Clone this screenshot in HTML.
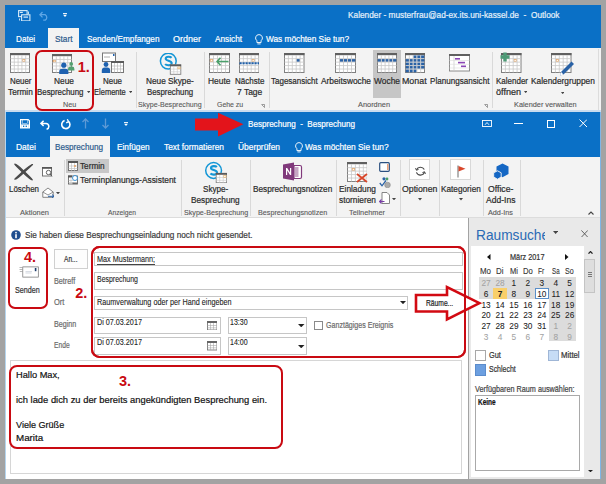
<!DOCTYPE html>
<html><head><meta charset="utf-8"><style>
div{-webkit-text-stroke:0.2px currentColor}
html,body{margin:0;padding:0;width:606px;height:484px;overflow:hidden;background:#a3a3a3;font-family:"Liberation Sans",sans-serif;}
#root{position:relative;width:606px;height:484px;overflow:hidden}
</style></head><body><div id="root">
<div style="position:absolute;left:5px;top:5px;width:596px;height:43px;background:#0a70c6;"></div>
<div style="position:absolute;left:5px;top:48px;width:596px;height:63px;background:#f3f3f3;"></div>
<div style="position:absolute;left:5px;top:110px;width:596px;height:2px;background:#c9dcef;"></div>
<div style="position:absolute;left:48px;top:28px;width:31px;height:20px;background:#f3f3f3;"></div>
<div style="position:absolute;left:347.50px;top:11.28px;line-height:9px;font-size:9px;font-weight:normal;color:#e6f0fa;white-space:pre;transform-origin:0 0;transform:scaleX(0.9206)">Kalender - musterfrau@ad-ex.its.uni-kassel.de  -  Outlook</div>
<div style="position:absolute;left:15.70px;top:34.88px;line-height:9px;font-size:9px;font-weight:normal;color:#fff;white-space:pre;transform-origin:0 0;transform:scaleX(0.9041)">Datei</div>
<div style="position:absolute;left:54.50px;top:34.88px;line-height:9px;font-size:9px;font-weight:normal;color:#2c5a8c;white-space:pre;transform-origin:0 0;transform:scaleX(0.9203)">Start</div>
<div style="position:absolute;left:86.50px;top:34.88px;line-height:9px;font-size:9px;font-weight:normal;color:#fff;white-space:pre;transform-origin:0 0;transform:scaleX(0.9111)">Senden/Empfangen</div>
<div style="position:absolute;left:173.00px;top:34.88px;line-height:9px;font-size:9px;font-weight:normal;color:#fff;white-space:pre;transform-origin:0 0;transform:scaleX(0.9994)">Ordner</div>
<div style="position:absolute;left:214.50px;top:34.88px;line-height:9px;font-size:9px;font-weight:normal;color:#fff;white-space:pre;transform-origin:0 0;transform:scaleX(0.9148)">Ansicht</div>
<div style="position:absolute;left:266.00px;top:34.88px;line-height:9px;font-size:9px;font-weight:normal;color:#fff;white-space:pre;transform-origin:0 0;transform:scaleX(0.9200)">Was möchten Sie tun?</div>
<svg style="position:absolute;left:254.5px;top:33.5px" width="8" height="11" viewBox="0 0 8 11"><path d="M4 0.6a3.4 3.4 0 0 0-2.1 6.1v1.8h4.2V6.7A3.4 3.4 0 0 0 4 0.6z" fill="none" stroke="#fff" stroke-width="0.9"/><line x1="2.4" y1="9.9" x2="5.6" y2="9.9" stroke="#fff" stroke-width="0.9"/></svg>
<svg style="position:absolute;left:18px;top:9.5px" width="12.5" height="11.5" viewBox="0 0 12.5 11.5"><rect x="0.6" y="0.6" width="8.5" height="6" fill="#0b6dc5" stroke="#d7ebf8" stroke-width="1.1"/><rect x="1.8" y="1.8" width="3" height="1.2" fill="#d7ebf8"/><rect x="3.6" y="4.8" width="8.3" height="6.1" fill="#0b6dc5" stroke="#d7ebf8" stroke-width="1.1"/><rect x="5.5" y="6.5" width="4.5" height="1.2" fill="#d7ebf8"/><path d="M10.5 1.5v2.5M1.5 8.5v2" stroke="#d7ebf8" stroke-width="0.9"/></svg>
<svg style="position:absolute;left:38.5px;top:11px" width="11" height="10" viewBox="0 0 11 10"><path d="M3.5 1L0.9 3.7L3.5 6.4M1.1 3.7h5.2a3.2 3.2 0 0 1 0 5.4H4.2" fill="none" stroke="#5ea6e6" stroke-width="1.3"/></svg>
<svg style="position:absolute;left:63px;top:13px" width="4" height="4" viewBox="0 0 4 4"><rect x="0" y="0" width="4" height="0.9" fill="#fff"/><polygon points="0,1.8 4,1.8 2,4" fill="#fff"/></svg>
<svg style="position:absolute;left:10px;top:53px" width="20" height="20" viewBox="0 0 20 20"><rect x="0.5" y="0.5" width="19" height="19" fill="#fff" stroke="#808080" stroke-width="1"/><rect x="0" y="0" width="20" height="2.2" fill="#606060"/><rect x="12.70" y="6.46" width="2.20" height="1.86" fill="none" stroke="#e9a866" stroke-width="0.8"/><line x1="4.30" y1="2.2" x2="4.30" y2="19.5" stroke="#c8c8c8" stroke-width="0.8"/><line x1="8.10" y1="2.2" x2="8.10" y2="19.5" stroke="#c8c8c8" stroke-width="0.8"/><line x1="11.90" y1="2.2" x2="11.90" y2="19.5" stroke="#c8c8c8" stroke-width="0.8"/><line x1="15.70" y1="2.2" x2="15.70" y2="19.5" stroke="#c8c8c8" stroke-width="0.8"/><line x1="0.5" y1="5.66" x2="19.5" y2="5.66" stroke="#c8c8c8" stroke-width="0.8"/><line x1="0.5" y1="9.12" x2="19.5" y2="9.12" stroke="#c8c8c8" stroke-width="0.8"/><line x1="0.5" y1="12.58" x2="19.5" y2="12.58" stroke="#c8c8c8" stroke-width="0.8"/><line x1="0.5" y1="16.04" x2="19.5" y2="16.04" stroke="#c8c8c8" stroke-width="0.8"/></svg>
<svg style="position:absolute;left:52px;top:54px" width="20" height="19" viewBox="0 0 20 19"><rect x="0.5" y="0.5" width="19" height="18" fill="#fff" stroke="#808080" stroke-width="1"/><rect x="0" y="0" width="20" height="2.2" fill="#606060"/><rect x="1.30" y="6.26" width="2.20" height="1.66" fill="none" stroke="#e9a866" stroke-width="0.8"/><line x1="4.30" y1="2.2" x2="4.30" y2="18.5" stroke="#c8c8c8" stroke-width="0.8"/><line x1="8.10" y1="2.2" x2="8.10" y2="18.5" stroke="#c8c8c8" stroke-width="0.8"/><line x1="11.90" y1="2.2" x2="11.90" y2="18.5" stroke="#c8c8c8" stroke-width="0.8"/><line x1="15.70" y1="2.2" x2="15.70" y2="18.5" stroke="#c8c8c8" stroke-width="0.8"/><line x1="0.5" y1="5.46" x2="19.5" y2="5.46" stroke="#c8c8c8" stroke-width="0.8"/><line x1="0.5" y1="8.72" x2="19.5" y2="8.72" stroke="#c8c8c8" stroke-width="0.8"/><line x1="0.5" y1="11.98" x2="19.5" y2="11.98" stroke="#c8c8c8" stroke-width="0.8"/><line x1="0.5" y1="15.24" x2="19.5" y2="15.24" stroke="#c8c8c8" stroke-width="0.8"/></svg>
<svg style="position:absolute;left:59px;top:62px" width="16" height="12" viewBox="0 0 16 12"><circle cx="4.8" cy="3.2" r="2.6" fill="#1f62b0"/><path d="M0.2 12v-2.3a3 3 0 0 1 3-3h3.2a3 3 0 0 1 3 3V12z" fill="#1f62b0"/><circle cx="12.2" cy="1.9" r="1.9" fill="#53a070"/><path d="M9 8.6v-1.6a2.4 2.4 0 0 1 2.4-2.4h1.6a2.4 2.4 0 0 1 2.4 2.4v1.6z" fill="#53a070"/></svg>
<svg style="position:absolute;left:101px;top:52px" width="23" height="21" viewBox="0 0 23 21"><rect x="1.5" y="1" width="13" height="8.5" fill="#fff" stroke="#777" stroke-width="1"/><path d="M3 5h6" stroke="#999" stroke-width="0.8"/><rect x="12" y="2" width="1.5" height="2" fill="#1f62b0"/><rect x="10.5" y="9.5" width="12" height="11" fill="#fff" stroke="#777" stroke-width="1"/><rect x="10" y="9" width="13" height="2" fill="#5b5b5b"/><path d="M13.5 11v9.5M16.5 11v9.5M19.5 11v9.5M11 14h11M11 17h11" stroke="#bbb" stroke-width="0.7"/><circle cx="5" cy="12.5" r="2.4" fill="#1f62b0"/><path d="M0.8 21v-2.6a3 3 0 0 1 3-3h2.4a3 3 0 0 1 3 3V21z" fill="#1f62b0"/></svg>
<svg style="position:absolute;left:159px;top:53px" width="23" height="22" viewBox="0 0 23 22"><circle cx="9.3" cy="8.1" r="7.9" fill="none" stroke="#1396d6" stroke-width="1.5"/><path d="M12.600000000000001 4.699999999999999c-1.2-1.2-5.6-1.6-5.9 0.9c-0.2 2.4 6.2 1.7 6 4.6c-0.2 2.7-5.2 2.4-6.6 0.9" fill="none" stroke="#1396d6" stroke-width="2.1"/><rect x="11.3" y="11.8" width="10.5" height="9.5" fill="#fff" stroke="#808080" stroke-width="0.9"/><rect x="11.0" y="11.5" width="11.1" height="1.8" fill="#5b5b5b"/><path d="M14.8 13.3v8M18.3 13.3v8M11.3 16.1h10.5M11.3 18.8h10.5" stroke="#c8c8c8" stroke-width="0.6"/><rect x="18.9" y="14.0" width="2.2" height="1.8" fill="none" stroke="#e8b060" stroke-width="0.6"/></svg>
<svg style="position:absolute;left:208.5px;top:53px" width="21" height="20" viewBox="0 0 21 20"><rect x="0.5" y="0.5" width="20" height="19" fill="#fff" stroke="#808080" stroke-width="1"/><rect x="0" y="0" width="21" height="2.2" fill="#606060"/><rect x="1.30" y="6.46" width="2.40" height="1.86" fill="none" stroke="#e9a866" stroke-width="0.8"/><line x1="4.50" y1="2.2" x2="4.50" y2="19.5" stroke="#c8c8c8" stroke-width="0.8"/><line x1="8.50" y1="2.2" x2="8.50" y2="19.5" stroke="#c8c8c8" stroke-width="0.8"/><line x1="12.50" y1="2.2" x2="12.50" y2="19.5" stroke="#c8c8c8" stroke-width="0.8"/><line x1="16.50" y1="2.2" x2="16.50" y2="19.5" stroke="#c8c8c8" stroke-width="0.8"/><line x1="0.5" y1="5.66" x2="20.5" y2="5.66" stroke="#c8c8c8" stroke-width="0.8"/><line x1="0.5" y1="9.12" x2="20.5" y2="9.12" stroke="#c8c8c8" stroke-width="0.8"/><line x1="0.5" y1="12.58" x2="20.5" y2="12.58" stroke="#c8c8c8" stroke-width="0.8"/><line x1="0.5" y1="16.04" x2="20.5" y2="16.04" stroke="#c8c8c8" stroke-width="0.8"/></svg>
<svg style="position:absolute;left:216px;top:57px" width="13" height="9" viewBox="0 0 13 9"><path d="M4.5 0.8L1 4.5L4.5 8.2M1.2 4.5H12.5" fill="none" stroke="#4aa06a" stroke-width="1.6"/></svg>
<svg style="position:absolute;left:238.6px;top:53px" width="20.5" height="20" viewBox="0 0 20.5 20"><rect x="0.5" y="0.5" width="19.5" height="19" fill="#fff" stroke="#808080" stroke-width="1"/><rect x="0" y="0" width="20.5" height="2.2" fill="#606060"/><rect x="13.00" y="6.46" width="2.30" height="1.86" fill="none" stroke="#e9a866" stroke-width="0.8"/><line x1="4.40" y1="2.2" x2="4.40" y2="19.5" stroke="#c8c8c8" stroke-width="0.8"/><line x1="8.30" y1="2.2" x2="8.30" y2="19.5" stroke="#c8c8c8" stroke-width="0.8"/><line x1="12.20" y1="2.2" x2="12.20" y2="19.5" stroke="#c8c8c8" stroke-width="0.8"/><line x1="16.10" y1="2.2" x2="16.10" y2="19.5" stroke="#c8c8c8" stroke-width="0.8"/><line x1="0.5" y1="5.66" x2="20.0" y2="5.66" stroke="#c8c8c8" stroke-width="0.8"/><line x1="0.5" y1="9.12" x2="20.0" y2="9.12" stroke="#c8c8c8" stroke-width="0.8"/><line x1="0.5" y1="12.58" x2="20.0" y2="12.58" stroke="#c8c8c8" stroke-width="0.8"/><line x1="0.5" y1="16.04" x2="20.0" y2="16.04" stroke="#c8c8c8" stroke-width="0.8"/></svg>
<svg style="position:absolute;left:238.6px;top:62px" width="20.5" height="2.5" viewBox="0 0 20.5 2.5"><line x1="0.5" y1="1.2" x2="20" y2="1.2" stroke="#1f5fa8" stroke-width="2" stroke-dasharray="2.2 0.8"/></svg>
<svg style="position:absolute;left:284px;top:53px" width="20.5" height="20" viewBox="0 0 20.5 20"><rect x="0.5" y="0.5" width="19.5" height="19" fill="#fff" stroke="#808080" stroke-width="1"/><rect x="0" y="0" width="20.5" height="2.2" fill="#606060"/><rect x="12.45" y="5.91" width="3.40" height="2.96" fill="#2a62a6"/><line x1="4.40" y1="2.2" x2="4.40" y2="19.5" stroke="#c8c8c8" stroke-width="0.8"/><line x1="8.30" y1="2.2" x2="8.30" y2="19.5" stroke="#c8c8c8" stroke-width="0.8"/><line x1="12.20" y1="2.2" x2="12.20" y2="19.5" stroke="#c8c8c8" stroke-width="0.8"/><line x1="16.10" y1="2.2" x2="16.10" y2="19.5" stroke="#c8c8c8" stroke-width="0.8"/><line x1="0.5" y1="5.66" x2="20.0" y2="5.66" stroke="#c8c8c8" stroke-width="0.8"/><line x1="0.5" y1="9.12" x2="20.0" y2="9.12" stroke="#c8c8c8" stroke-width="0.8"/><line x1="0.5" y1="12.58" x2="20.0" y2="12.58" stroke="#c8c8c8" stroke-width="0.8"/><line x1="0.5" y1="16.04" x2="20.0" y2="16.04" stroke="#c8c8c8" stroke-width="0.8"/></svg>
<svg style="position:absolute;left:335px;top:53px" width="21" height="20" viewBox="0 0 21 20"><rect x="0.5" y="0.5" width="20" height="19" fill="#fff" stroke="#808080" stroke-width="1"/><rect x="0" y="0" width="21" height="2.2" fill="#606060"/><rect x="4.75" y="5.91" width="3.50" height="2.96" fill="#2a62a6"/><rect x="8.75" y="5.91" width="3.50" height="2.96" fill="#2a62a6"/><rect x="12.75" y="5.91" width="3.50" height="2.96" fill="#2a62a6"/><rect x="16.75" y="5.91" width="3.50" height="2.96" fill="#2a62a6"/><line x1="4.50" y1="2.2" x2="4.50" y2="19.5" stroke="#c8c8c8" stroke-width="0.8"/><line x1="8.50" y1="2.2" x2="8.50" y2="19.5" stroke="#c8c8c8" stroke-width="0.8"/><line x1="12.50" y1="2.2" x2="12.50" y2="19.5" stroke="#c8c8c8" stroke-width="0.8"/><line x1="16.50" y1="2.2" x2="16.50" y2="19.5" stroke="#c8c8c8" stroke-width="0.8"/><line x1="0.5" y1="5.66" x2="20.5" y2="5.66" stroke="#c8c8c8" stroke-width="0.8"/><line x1="0.5" y1="9.12" x2="20.5" y2="9.12" stroke="#c8c8c8" stroke-width="0.8"/><line x1="0.5" y1="12.58" x2="20.5" y2="12.58" stroke="#c8c8c8" stroke-width="0.8"/><line x1="0.5" y1="16.04" x2="20.5" y2="16.04" stroke="#c8c8c8" stroke-width="0.8"/></svg>
<div style="position:absolute;left:372.8px;top:50px;width:28px;height:48px;background:#c6c6c6;"></div>
<svg style="position:absolute;left:376.5px;top:53px" width="20" height="20" viewBox="0 0 20 20"><rect x="0.5" y="0.5" width="19" height="19" fill="#fff" stroke="#808080" stroke-width="1"/><rect x="0" y="0" width="20" height="2.2" fill="#606060"/><rect x="0.75" y="5.91" width="3.30" height="2.96" fill="#2a62a6"/><rect x="4.55" y="5.91" width="3.30" height="2.96" fill="#2a62a6"/><rect x="8.35" y="5.91" width="3.30" height="2.96" fill="#2a62a6"/><rect x="12.15" y="5.91" width="3.30" height="2.96" fill="#2a62a6"/><rect x="15.95" y="5.91" width="3.30" height="2.96" fill="#2a62a6"/><line x1="4.30" y1="2.2" x2="4.30" y2="19.5" stroke="#c8c8c8" stroke-width="0.8"/><line x1="8.10" y1="2.2" x2="8.10" y2="19.5" stroke="#c8c8c8" stroke-width="0.8"/><line x1="11.90" y1="2.2" x2="11.90" y2="19.5" stroke="#c8c8c8" stroke-width="0.8"/><line x1="15.70" y1="2.2" x2="15.70" y2="19.5" stroke="#c8c8c8" stroke-width="0.8"/><line x1="0.5" y1="5.66" x2="19.5" y2="5.66" stroke="#c8c8c8" stroke-width="0.8"/><line x1="0.5" y1="9.12" x2="19.5" y2="9.12" stroke="#c8c8c8" stroke-width="0.8"/><line x1="0.5" y1="12.58" x2="19.5" y2="12.58" stroke="#c8c8c8" stroke-width="0.8"/><line x1="0.5" y1="16.04" x2="19.5" y2="16.04" stroke="#c8c8c8" stroke-width="0.8"/></svg>
<svg style="position:absolute;left:404.6px;top:53px" width="20" height="20" viewBox="0 0 20 20"><rect x="0.5" y="0.5" width="19" height="19" fill="#fff" stroke="#808080" stroke-width="1"/><rect x="0" y="0" width="20" height="2.2" fill="#606060"/><rect x="8.35" y="2.45" width="3.30" height="2.96" fill="#2a62a6"/><rect x="12.15" y="2.45" width="3.30" height="2.96" fill="#2a62a6"/><rect x="15.95" y="2.45" width="3.30" height="2.96" fill="#2a62a6"/><rect x="0.75" y="5.91" width="3.30" height="2.96" fill="#2a62a6"/><rect x="4.55" y="5.91" width="3.30" height="2.96" fill="#2a62a6"/><rect x="8.35" y="5.91" width="3.30" height="2.96" fill="#2a62a6"/><rect x="12.15" y="5.91" width="3.30" height="2.96" fill="#2a62a6"/><rect x="15.95" y="5.91" width="3.30" height="2.96" fill="#2a62a6"/><rect x="0.75" y="9.37" width="3.30" height="2.96" fill="#2a62a6"/><rect x="4.55" y="9.37" width="3.30" height="2.96" fill="#2a62a6"/><rect x="8.35" y="9.37" width="3.30" height="2.96" fill="#2a62a6"/><rect x="12.15" y="9.37" width="3.30" height="2.96" fill="#2a62a6"/><rect x="15.95" y="9.37" width="3.30" height="2.96" fill="#2a62a6"/><rect x="0.75" y="12.83" width="3.30" height="2.96" fill="#2a62a6"/><rect x="4.55" y="12.83" width="3.30" height="2.96" fill="#2a62a6"/><rect x="8.35" y="12.83" width="3.30" height="2.96" fill="#2a62a6"/><rect x="12.15" y="12.83" width="3.30" height="2.96" fill="#2a62a6"/><rect x="15.95" y="12.83" width="3.30" height="2.96" fill="#2a62a6"/><rect x="0.75" y="16.29" width="3.30" height="2.96" fill="#2a62a6"/><rect x="4.55" y="16.29" width="3.30" height="2.96" fill="#2a62a6"/><rect x="8.35" y="16.29" width="3.30" height="2.96" fill="#2a62a6"/><line x1="4.30" y1="2.2" x2="4.30" y2="19.5" stroke="#c8c8c8" stroke-width="0.8"/><line x1="8.10" y1="2.2" x2="8.10" y2="19.5" stroke="#c8c8c8" stroke-width="0.8"/><line x1="11.90" y1="2.2" x2="11.90" y2="19.5" stroke="#c8c8c8" stroke-width="0.8"/><line x1="15.70" y1="2.2" x2="15.70" y2="19.5" stroke="#c8c8c8" stroke-width="0.8"/><line x1="0.5" y1="5.66" x2="19.5" y2="5.66" stroke="#c8c8c8" stroke-width="0.8"/><line x1="0.5" y1="9.12" x2="19.5" y2="9.12" stroke="#c8c8c8" stroke-width="0.8"/><line x1="0.5" y1="12.58" x2="19.5" y2="12.58" stroke="#c8c8c8" stroke-width="0.8"/><line x1="0.5" y1="16.04" x2="19.5" y2="16.04" stroke="#c8c8c8" stroke-width="0.8"/></svg>
<svg style="position:absolute;left:448.5px;top:54px" width="21" height="17.5" viewBox="0 0 21 17.5"><rect x="0.5" y="0.5" width="20" height="16.5" fill="#fff" stroke="#808080" stroke-width="0.9"/><rect x="0" y="0" width="21" height="2" fill="#606060"/><path d="M5 2v15" stroke="#c8c8c8" stroke-width="0.7"/><path d="M0.5 6.5h20M0.5 10.3h20M0.5 14h20" stroke="#dcdcdc" stroke-width="0.6"/><rect x="6" y="4" width="5" height="1.6" fill="#8a45b5"/><rect x="9" y="7.8" width="7" height="1.6" fill="#8a45b5"/><rect x="12" y="11.5" width="5" height="1.6" fill="#8a45b5"/></svg>
<svg style="position:absolute;left:501px;top:53px" width="20.5" height="20" viewBox="0 0 20.5 20"><rect x="0.5" y="0.5" width="19.5" height="19" fill="#fff" stroke="#808080" stroke-width="1"/><rect x="0" y="0" width="20.5" height="2.2" fill="#606060"/><rect x="13.00" y="6.46" width="2.30" height="1.86" fill="none" stroke="#e9a866" stroke-width="0.8"/><line x1="4.40" y1="2.2" x2="4.40" y2="19.5" stroke="#c8c8c8" stroke-width="0.8"/><line x1="8.30" y1="2.2" x2="8.30" y2="19.5" stroke="#c8c8c8" stroke-width="0.8"/><line x1="12.20" y1="2.2" x2="12.20" y2="19.5" stroke="#c8c8c8" stroke-width="0.8"/><line x1="16.10" y1="2.2" x2="16.10" y2="19.5" stroke="#c8c8c8" stroke-width="0.8"/><line x1="0.5" y1="5.66" x2="20.0" y2="5.66" stroke="#c8c8c8" stroke-width="0.8"/><line x1="0.5" y1="9.12" x2="20.0" y2="9.12" stroke="#c8c8c8" stroke-width="0.8"/><line x1="0.5" y1="12.58" x2="20.0" y2="12.58" stroke="#c8c8c8" stroke-width="0.8"/><line x1="0.5" y1="16.04" x2="20.0" y2="16.04" stroke="#c8c8c8" stroke-width="0.8"/></svg>
<svg style="position:absolute;left:500px;top:52px" width="10" height="10" viewBox="0 0 10 10"><path d="M3.3 0.5h3.4v2.8h2.8v3.4H6.7v2.8H3.3V6.7H0.5V3.3h2.8z" fill="#4e9a76"/></svg>
<svg style="position:absolute;left:551px;top:53px" width="20.5" height="20" viewBox="0 0 20.5 20"><rect x="0.5" y="0.5" width="19.5" height="19" fill="#fff" stroke="#808080" stroke-width="1"/><rect x="0" y="0" width="20.5" height="2.2" fill="#606060"/><rect x="5.20" y="6.46" width="2.30" height="1.86" fill="none" stroke="#e9a866" stroke-width="0.8"/><line x1="4.40" y1="2.2" x2="4.40" y2="19.5" stroke="#c8c8c8" stroke-width="0.8"/><line x1="8.30" y1="2.2" x2="8.30" y2="19.5" stroke="#c8c8c8" stroke-width="0.8"/><line x1="12.20" y1="2.2" x2="12.20" y2="19.5" stroke="#c8c8c8" stroke-width="0.8"/><line x1="16.10" y1="2.2" x2="16.10" y2="19.5" stroke="#c8c8c8" stroke-width="0.8"/><line x1="0.5" y1="5.66" x2="20.0" y2="5.66" stroke="#c8c8c8" stroke-width="0.8"/><line x1="0.5" y1="9.12" x2="20.0" y2="9.12" stroke="#c8c8c8" stroke-width="0.8"/><line x1="0.5" y1="12.58" x2="20.0" y2="12.58" stroke="#c8c8c8" stroke-width="0.8"/><line x1="0.5" y1="16.04" x2="20.0" y2="16.04" stroke="#c8c8c8" stroke-width="0.8"/></svg>
<svg style="position:absolute;left:558px;top:59.5px" width="18" height="17" viewBox="0 0 18 17"><path d="M2 15.5L3 12L13.5 1.5L16 4L5.5 14.5z" fill="#2a62a6"/><path d="M2 15.5L3 12L5.5 14.5z" fill="#fff"/></svg>
<div style="position:absolute;left:9.70px;top:77.20px;line-height:8.5px;font-size:8.5px;font-weight:normal;color:#2b2b2b;white-space:pre;transform-origin:0 0;transform:scaleX(0.9285)">Neuer</div>
<div style="position:absolute;left:8.40px;top:88.00px;line-height:8.5px;font-size:8.5px;font-weight:normal;color:#2b2b2b;white-space:pre;transform-origin:0 0;transform:scaleX(0.9720)">Termin</div>
<div style="position:absolute;left:53.60px;top:77.20px;line-height:8.5px;font-size:8.5px;font-weight:normal;color:#2b2b2b;white-space:pre;transform-origin:0 0;transform:scaleX(0.9789)">Neue</div>
<div style="position:absolute;left:37.00px;top:88.00px;line-height:8.5px;font-size:8.5px;font-weight:normal;color:#2b2b2b;white-space:pre;transform-origin:0 0;transform:scaleX(0.9283)">Besprechung</div>
<svg style="position:absolute;left:86.6px;top:90.7px" width="3.4" height="2.2" viewBox="0 0 3.4 2.2"><polygon points="0,0 3.4,0 1.7,2.2" fill="#444"/></svg>
<div style="position:absolute;left:103.00px;top:77.20px;line-height:8.5px;font-size:8.5px;font-weight:normal;color:#2b2b2b;white-space:pre;transform-origin:0 0;transform:scaleX(0.9347)">Neue</div>
<div style="position:absolute;left:94.00px;top:88.00px;line-height:8.5px;font-size:8.5px;font-weight:normal;color:#2b2b2b;white-space:pre;transform-origin:0 0;transform:scaleX(0.8853)">Elemente</div>
<svg style="position:absolute;left:129.1px;top:90.7px" width="3.4" height="2.2" viewBox="0 0 3.4 2.2"><polygon points="0,0 3.4,0 1.7,2.2" fill="#444"/></svg>
<div style="position:absolute;left:63.10px;top:100.87px;line-height:7.6px;font-size:7.6px;font-weight:normal;color:#5a5a5a;-webkit-text-stroke:0.12px currentColor;white-space:pre;transform-origin:0 0;transform:scaleX(0.9471)">Neu</div>
<div style="position:absolute;left:136px;top:52px;width:1px;height:56px;background:#d9d9d9;"></div>
<div style="position:absolute;left:204px;top:52px;width:1px;height:56px;background:#d9d9d9;"></div>
<div style="position:absolute;left:268.5px;top:52px;width:1px;height:56px;background:#d9d9d9;"></div>
<div style="position:absolute;left:491.8px;top:52px;width:1px;height:56px;background:#d9d9d9;"></div>
<div style="position:absolute;left:145.70px;top:77.20px;line-height:8.5px;font-size:8.5px;font-weight:normal;color:#2b2b2b;white-space:pre;transform-origin:0 0;transform:scaleX(0.9727)">Neue Skype-</div>
<div style="position:absolute;left:146.60px;top:88.00px;line-height:8.5px;font-size:8.5px;font-weight:normal;color:#2b2b2b;white-space:pre;transform-origin:0 0;transform:scaleX(0.9223)">Besprechung</div>
<div style="position:absolute;left:138.00px;top:100.87px;line-height:7.6px;font-size:7.6px;font-weight:normal;color:#5a5a5a;-webkit-text-stroke:0.12px currentColor;white-space:pre;transform-origin:0 0;transform:scaleX(0.9300)">Skype-Besprechung</div>
<div style="position:absolute;left:208.00px;top:77.20px;line-height:8.5px;font-size:8.5px;font-weight:normal;color:#2b2b2b;white-space:pre;transform-origin:0 0;transform:scaleX(0.9917)">Heute</div>
<div style="position:absolute;left:234.60px;top:77.20px;line-height:8.5px;font-size:8.5px;font-weight:normal;color:#2b2b2b;white-space:pre;transform-origin:0 0;transform:scaleX(0.9427)">Nächste</div>
<div style="position:absolute;left:236.70px;top:88.00px;line-height:8.5px;font-size:8.5px;font-weight:normal;color:#2b2b2b;white-space:pre;transform-origin:0 0;transform:scaleX(0.9970)">7 Tage</div>
<div style="position:absolute;left:216.80px;top:100.87px;line-height:7.6px;font-size:7.6px;font-weight:normal;color:#5a5a5a;-webkit-text-stroke:0.12px currentColor;white-space:pre;transform-origin:0 0;transform:scaleX(0.9123)">Gehe zu</div>
<svg style="position:absolute;left:260.5px;top:103.5px" width="4" height="4" viewBox="0 0 4 4"><path d="M0.5 0.5h3v3M0.8 0.8L3.5 3.5" fill="none" stroke="#777" stroke-width="0.7"/></svg>
<div style="position:absolute;left:271.00px;top:77.20px;line-height:8.5px;font-size:8.5px;font-weight:normal;color:#2b2b2b;white-space:pre;transform-origin:0 0;transform:scaleX(0.9411)">Tagesansicht</div>
<div style="position:absolute;left:321.00px;top:77.20px;line-height:8.5px;font-size:8.5px;font-weight:normal;color:#2b2b2b;white-space:pre;transform-origin:0 0;transform:scaleX(0.9798)">Arbeitswoche</div>
<div style="position:absolute;left:374.00px;top:77.20px;line-height:8.5px;font-size:8.5px;font-weight:normal;color:#2b2b2b;white-space:pre;transform-origin:0 0;transform:scaleX(0.9881)">Woche</div>
<div style="position:absolute;left:402.00px;top:77.20px;line-height:8.5px;font-size:8.5px;font-weight:normal;color:#2b2b2b;white-space:pre;transform-origin:0 0;transform:scaleX(1.0413)">Monat</div>
<div style="position:absolute;left:429.60px;top:77.20px;line-height:8.5px;font-size:8.5px;font-weight:normal;color:#2b2b2b;white-space:pre;transform-origin:0 0;transform:scaleX(0.9521)">Planungsansicht</div>
<div style="position:absolute;left:358.00px;top:100.87px;line-height:7.6px;font-size:7.6px;font-weight:normal;color:#5a5a5a;-webkit-text-stroke:0.12px currentColor;white-space:pre;transform-origin:0 0;transform:scaleX(0.9715)">Anordnen</div>
<svg style="position:absolute;left:484px;top:103.5px" width="4" height="4" viewBox="0 0 4 4"><path d="M0.5 0.5h3v3M0.8 0.8L3.5 3.5" fill="none" stroke="#777" stroke-width="0.7"/></svg>
<div style="position:absolute;left:496.00px;top:77.20px;line-height:8.5px;font-size:8.5px;font-weight:normal;color:#2b2b2b;white-space:pre;transform-origin:0 0;transform:scaleX(0.9403)">Kalender</div>
<div style="position:absolute;left:496.00px;top:88.00px;line-height:8.5px;font-size:8.5px;font-weight:normal;color:#2b2b2b;white-space:pre;transform-origin:0 0;transform:scaleX(1.0645)">öffnen</div>
<svg style="position:absolute;left:523.7px;top:90.9px" width="3.4" height="2.2" viewBox="0 0 3.4 2.2"><polygon points="0,0 3.4,0 1.7,2.2" fill="#444"/></svg>
<div style="position:absolute;left:530.50px;top:77.20px;line-height:8.5px;font-size:8.5px;font-weight:normal;color:#2b2b2b;white-space:pre;transform-origin:0 0;transform:scaleX(0.9780)">Kalendergruppen</div>
<svg style="position:absolute;left:561px;top:91.5px" width="3.4" height="2.2" viewBox="0 0 3.4 2.2"><polygon points="0,0 3.4,0 1.7,2.2" fill="#444"/></svg>
<div style="position:absolute;left:514.00px;top:100.87px;line-height:7.6px;font-size:7.6px;font-weight:normal;color:#5a5a5a;-webkit-text-stroke:0.12px currentColor;white-space:pre;transform-origin:0 0;transform:scaleX(0.9644)">Kalender verwalten</div>
<div style="position:absolute;left:598px;top:49px;width:1px;height:61px;background:#dcdcdc;"></div>
<div style="position:absolute;left:34.9px;top:50px;width:59.50000000000001px;height:61px;box-sizing:border-box;border:2.8px solid #c90a12;background:transparent;border-radius:7px"></div>
<div style="position:absolute;left:77.75px;top:59.93px;line-height:14.5px;font-size:14.5px;font-weight:bold;color:#c90a12;-webkit-text-stroke:0px currentColor;white-space:pre;transform-origin:0 0;transform:scaleX(1.0000)">1.</div>
<div style="position:absolute;left:5px;top:112px;width:596px;height:45px;background:#0a70c6;"></div>
<div style="position:absolute;left:5px;top:157px;width:596px;height:61px;background:#f3f3f3;"></div>
<div style="position:absolute;left:5px;top:218px;width:463px;height:261px;background:#ffffff;"></div>
<div style="position:absolute;left:5px;top:217.4px;width:596px;height:1px;background:#dcdcdc;"></div>
<div style="position:absolute;left:49.7px;top:136px;width:60.3px;height:21px;background:#f3f3f3;"></div>
<div style="position:absolute;left:248.00px;top:120.38px;line-height:9px;font-size:9px;font-weight:normal;color:#fff;white-space:pre;transform-origin:0 0;transform:scaleX(0.8986)">Besprechung  -  Besprechung</div>
<div style="position:absolute;left:16.00px;top:143.18px;line-height:9px;font-size:9px;font-weight:normal;color:#fff;white-space:pre;transform-origin:0 0;transform:scaleX(0.9422)">Datei</div>
<div style="position:absolute;left:55.40px;top:143.18px;line-height:9px;font-size:9px;font-weight:normal;color:#2c5a8c;white-space:pre;transform-origin:0 0;transform:scaleX(0.9067)">Besprechung</div>
<div style="position:absolute;left:117.00px;top:143.18px;line-height:9px;font-size:9px;font-weight:normal;color:#fff;white-space:pre;transform-origin:0 0;transform:scaleX(0.9175)">Einfügen</div>
<div style="position:absolute;left:164.00px;top:143.18px;line-height:9px;font-size:9px;font-weight:normal;color:#fff;white-space:pre;transform-origin:0 0;transform:scaleX(0.9298)">Text formatieren</div>
<div style="position:absolute;left:238.00px;top:143.18px;line-height:9px;font-size:9px;font-weight:normal;color:#fff;white-space:pre;transform-origin:0 0;transform:scaleX(0.9327)">Überprüfen</div>
<div style="position:absolute;left:305.40px;top:143.18px;line-height:9px;font-size:9px;font-weight:normal;color:#fff;white-space:pre;transform-origin:0 0;transform:scaleX(0.9266)">Was möchten Sie tun?</div>
<svg style="position:absolute;left:295px;top:141.5px" width="8" height="11" viewBox="0 0 8 11"><path d="M4 0.6a3.4 3.4 0 0 0-2.1 6.1v1.8h4.2V6.7A3.4 3.4 0 0 0 4 0.6z" fill="none" stroke="#fff" stroke-width="0.9"/><line x1="2.4" y1="9.9" x2="5.6" y2="9.9" stroke="#fff" stroke-width="0.9"/></svg>
<svg style="position:absolute;left:20px;top:119px" width="10" height="9.6" viewBox="0 0 10 9.6"><path d="M0.6 0.6h7.6l1.2 1.2v7.2H0.6z" fill="none" stroke="#fff" stroke-width="1.2"/><rect x="2.3" y="1" width="5" height="3.4" fill="#0a70c6" stroke="#fff" stroke-width="0.5"/><rect x="1.2" y="5.4" width="7.6" height="3.6" fill="#fff"/><rect x="3" y="6.6" width="1.3" height="1.4" fill="#0a70c6"/><rect x="5.6" y="6.6" width="1.3" height="1.4" fill="#0a70c6"/></svg>
<svg style="position:absolute;left:39.8px;top:119.5px" width="11" height="10" viewBox="0 0 11 10"><path d="M3.6 0.8L1 3.4L3.6 6M1.2 3.4h4.8a3 3 0 0 1 0.6 5.9" fill="none" stroke="#fff" stroke-width="1.5"/></svg>
<svg style="position:absolute;left:60.5px;top:119px" width="10" height="10.5" viewBox="0 0 10 10.5"><path d="M7.4 2.3A4.1 4.1 0 1 1 3.6 1.6" fill="none" stroke="#fff" stroke-width="1.6"/><path d="M6.3 0.3L7.6 2.6L5.2 3.8" fill="none" stroke="#fff" stroke-width="1.3"/></svg>
<svg style="position:absolute;left:82px;top:118px" width="7" height="11" viewBox="0 0 7 11"><path d="M3.5 10.5V1M0.5 4L3.5 1L6.5 4" fill="none" stroke="#5d9ad6" stroke-width="1.3"/></svg>
<svg style="position:absolute;left:102px;top:118px" width="7" height="11" viewBox="0 0 7 11"><path d="M3.5 0.5V10M0.5 7L3.5 10L6.5 7" fill="none" stroke="#5d9ad6" stroke-width="1.3"/></svg>
<svg style="position:absolute;left:124px;top:121.5px" width="4" height="4" viewBox="0 0 4 4"><rect x="0" y="0" width="4" height="0.9" fill="#fff"/><polygon points="0,1.8 4,1.8 2,4" fill="#fff"/></svg>
<svg style="position:absolute;left:195px;top:112px" width="49" height="25" viewBox="0 0 49 25"><polygon points="0,6.6 23,6.6 23,0.8 48.4,12.3 23,24.5 23,18.4 0,18.4" fill="#e3141b"/></svg>
<svg style="position:absolute;left:481.5px;top:120px" width="10" height="7" viewBox="0 0 10 7"><rect x="0.5" y="0.5" width="9" height="6" fill="none" stroke="#fff" stroke-width="0.9"/><path d="M3 4.8L5 2.5L7 4.8" fill="none" stroke="#fff" stroke-width="0.9"/></svg>
<div style="position:absolute;left:514px;top:123.3px;width:8.5px;height:1px;background:#fff;"></div>
<div style="position:absolute;left:546.7px;top:119.7px;width:8px;height:8px;box-sizing:border-box;border:1px solid #fff;background:transparent;"></div>
<svg style="position:absolute;left:578.8px;top:119.4px" width="8.5" height="8.5" viewBox="0 0 8.5 8.5"><path d="M0.5 0.5L8 8M8 0.5L0.5 8" stroke="#fff" stroke-width="1"/></svg>
<svg style="position:absolute;left:13px;top:162px" width="21" height="19" viewBox="0 0 21 19"><path d="M1.8 2.2Q3.5 1.8 10 8.5Q17 15 19.3 17.8Q17.5 17.8 10 10.5Q3 4 1.8 2.2z" fill="#4a4a4a" stroke="#4a4a4a" stroke-width="1.2" stroke-linejoin="round"/><path d="M19.5 2.5Q18 2.2 10.5 9Q3.5 15.5 1.8 17.2Q3.8 17.3 10.8 10.5Q18 4 19.5 2.5z" fill="#4a4a4a" stroke="#4a4a4a" stroke-width="1.2" stroke-linejoin="round"/></svg>
<svg style="position:absolute;left:42px;top:167px" width="11" height="10" viewBox="0 0 11 10"><rect x="0.5" y="0.5" width="9" height="8.5" fill="#fff" stroke="#666" stroke-width="0.9"/><rect x="0" y="0" width="10" height="1.8" fill="#555"/><circle cx="6.5" cy="5.5" r="2.2" fill="none" stroke="#555" stroke-width="0.9"/><path d="M8 7L10 9.3" stroke="#555" stroke-width="1"/></svg>
<svg style="position:absolute;left:41.5px;top:186.5px" width="13" height="11" viewBox="0 0 13 11"><path d="M0.8 5L6 1L11.2 5V10.3H0.8z" fill="#fff" stroke="#777" stroke-width="0.9"/><path d="M0.8 5L6 8L11.2 5" fill="none" stroke="#777" stroke-width="0.8"/><path d="M6 9.3h6M10 7.5l2 1.8l-2 1.8" fill="none" stroke="#2a62a6" stroke-width="1"/></svg>
<svg style="position:absolute;left:56.3px;top:191.8px" width="4" height="2.4" viewBox="0 0 4 2.4"><polygon points="0,0 4,0 2.0,2.4" fill="#444"/></svg>
<div style="position:absolute;left:8.80px;top:185.30px;line-height:8.5px;font-size:8.5px;font-weight:normal;color:#2b2b2b;white-space:pre;transform-origin:0 0;transform:scaleX(0.9334)">Löschen</div>
<div style="position:absolute;left:20.30px;top:208.87px;line-height:7.6px;font-size:7.6px;font-weight:normal;color:#5a5a5a;-webkit-text-stroke:0.12px currentColor;white-space:pre;transform-origin:0 0;transform:scaleX(0.9776)">Aktionen</div>
<div style="position:absolute;left:63.5px;top:160px;width:1px;height:56px;background:#d9d9d9;"></div>
<div style="position:absolute;left:181.3px;top:160px;width:1px;height:56px;background:#d9d9d9;"></div>
<div style="position:absolute;left:249.5px;top:160px;width:1px;height:56px;background:#d9d9d9;"></div>
<div style="position:absolute;left:335.5px;top:160px;width:1px;height:56px;background:#d9d9d9;"></div>
<div style="position:absolute;left:399.7px;top:160px;width:1px;height:56px;background:#d9d9d9;"></div>
<div style="position:absolute;left:438.5px;top:160px;width:1px;height:56px;background:#d9d9d9;"></div>
<div style="position:absolute;left:482.5px;top:160px;width:1px;height:56px;background:#d9d9d9;"></div>
<div style="position:absolute;left:519.6px;top:160px;width:1px;height:56px;background:#d9d9d9;"></div>
<div style="position:absolute;left:66.2px;top:159px;width:42.8px;height:13.7px;background:#c8c8c8;"></div>
<svg style="position:absolute;left:67.5px;top:161px" width="10" height="10" viewBox="0 0 10 10"><rect x="0.5" y="0.5" width="9" height="9" fill="#fff" stroke="#666" stroke-width="0.9"/><rect x="0" y="0" width="10" height="2" fill="#555"/><path d="M3.5 2v8M6.5 2v8M0.5 5h9M0.5 7.5h9" stroke="#bbb" stroke-width="0.6"/><circle cx="7" cy="5" r="1" fill="#e8a060"/></svg>
<svg style="position:absolute;left:67.5px;top:174.3px" width="10.5" height="10.5" viewBox="0 0 10.5 10.5"><rect x="0.5" y="2" width="9" height="8" fill="#fff" stroke="#666" stroke-width="0.9"/><rect x="0" y="1.5" width="4" height="2" fill="#555"/><path d="M3 4v6M0.5 6.5h5M0.5 8.5h5" stroke="#bbb" stroke-width="0.6"/><circle cx="7" cy="4" r="2.5" fill="#fff" stroke="#2a8ad0" stroke-width="0.9"/><path d="M4.5 8.5h5v1.6h-5z" fill="#6a6a6a"/></svg>
<div style="position:absolute;left:80.30px;top:162.30px;line-height:8.5px;font-size:8.5px;font-weight:normal;color:#2b2b2b;white-space:pre;transform-origin:0 0;transform:scaleX(0.9680)">Termin</div>
<div style="position:absolute;left:80.30px;top:175.60px;line-height:8.5px;font-size:8.5px;font-weight:normal;color:#2b2b2b;white-space:pre;transform-origin:0 0;transform:scaleX(0.9853)">Terminplanungs-Assistent</div>
<div style="position:absolute;left:108.00px;top:208.87px;line-height:7.6px;font-size:7.6px;font-weight:normal;color:#5a5a5a;-webkit-text-stroke:0.12px currentColor;white-space:pre;transform-origin:0 0;transform:scaleX(0.8841)">Anzeigen</div>
<svg style="position:absolute;left:204px;top:161px" width="23" height="22" viewBox="0 0 23 22"><circle cx="9.6" cy="9.5" r="7.9" fill="none" stroke="#1396d6" stroke-width="1.5"/><path d="M12.899999999999999 6.1c-1.2-1.2-5.6-1.6-5.9 0.9c-0.2 2.4 6.2 1.7 6 4.6c-0.2 2.7-5.2 2.4-6.6 0.9" fill="none" stroke="#1396d6" stroke-width="2.1"/><rect x="12.2" y="12.3" width="10.5" height="9.5" fill="#fff" stroke="#808080" stroke-width="0.9"/><rect x="11.899999999999999" y="12.0" width="11.1" height="1.8" fill="#5b5b5b"/><path d="M15.7 13.8v8M19.2 13.8v8M12.2 16.6h10.5M12.2 19.3h10.5" stroke="#c8c8c8" stroke-width="0.6"/><rect x="19.799999999999997" y="14.5" width="2.2" height="1.8" fill="none" stroke="#e8b060" stroke-width="0.6"/></svg>
<div style="position:absolute;left:202.80px;top:185.30px;line-height:8.5px;font-size:8.5px;font-weight:normal;color:#2b2b2b;white-space:pre;transform-origin:0 0;transform:scaleX(0.9521)">Skype-</div>
<div style="position:absolute;left:191.00px;top:196.10px;line-height:8.5px;font-size:8.5px;font-weight:normal;color:#2b2b2b;white-space:pre;transform-origin:0 0;transform:scaleX(0.9722)">Besprechung</div>
<div style="position:absolute;left:183.60px;top:208.87px;line-height:7.6px;font-size:7.6px;font-weight:normal;color:#5a5a5a;-webkit-text-stroke:0.12px currentColor;white-space:pre;transform-origin:0 0;transform:scaleX(0.9387)">Skype-Besprechung</div>
<svg style="position:absolute;left:283px;top:162px" width="20" height="19" viewBox="0 0 20 19"><path d="M11 3.5h6a1.5 1.5 0 0 1 1.5 1.5v10a1.5 1.5 0 0 1-1.5 1.5h-6z" fill="#fff" stroke="#80397b" stroke-width="1.2"/><path d="M12 6h3.5M12 8h3.5M12 10h3.5M12 12h3.5M12 14h3.5" stroke="#80397b" stroke-width="0.9"/><path d="M0 2.5L11 0.5V18.5L0 16.5z" fill="#80397b"/><path d="M3 13V6h1.2l2.8 4.5V6h1.2v7H7L4.2 8.5V13z" fill="#fff"/></svg>
<div style="position:absolute;left:253.00px;top:185.30px;line-height:8.5px;font-size:8.5px;font-weight:normal;color:#2b2b2b;white-space:pre;transform-origin:0 0;transform:scaleX(0.9698)">Besprechungsnotizen</div>
<div style="position:absolute;left:257.70px;top:208.87px;line-height:7.6px;font-size:7.6px;font-weight:normal;color:#5a5a5a;-webkit-text-stroke:0.12px currentColor;white-space:pre;transform-origin:0 0;transform:scaleX(0.9487)">Besprechungsnotizen</div>
<svg style="position:absolute;left:346.6px;top:161.5px" width="20.8" height="20" viewBox="0 0 20.8 20"><rect x="0.5" y="0.5" width="19.8" height="19" fill="#fff" stroke="#808080" stroke-width="1"/><rect x="0" y="0" width="20.8" height="2.2" fill="#606060"/><rect x="5.26" y="6.46" width="2.36" height="1.86" fill="none" stroke="#e9a866" stroke-width="0.8"/><line x1="4.46" y1="2.2" x2="4.46" y2="19.5" stroke="#c8c8c8" stroke-width="0.8"/><line x1="8.42" y1="2.2" x2="8.42" y2="19.5" stroke="#c8c8c8" stroke-width="0.8"/><line x1="12.38" y1="2.2" x2="12.38" y2="19.5" stroke="#c8c8c8" stroke-width="0.8"/><line x1="16.34" y1="2.2" x2="16.34" y2="19.5" stroke="#c8c8c8" stroke-width="0.8"/><line x1="0.5" y1="5.66" x2="20.3" y2="5.66" stroke="#c8c8c8" stroke-width="0.8"/><line x1="0.5" y1="9.12" x2="20.3" y2="9.12" stroke="#c8c8c8" stroke-width="0.8"/><line x1="0.5" y1="12.58" x2="20.3" y2="12.58" stroke="#c8c8c8" stroke-width="0.8"/><line x1="0.5" y1="16.04" x2="20.3" y2="16.04" stroke="#c8c8c8" stroke-width="0.8"/></svg>
<svg style="position:absolute;left:356px;top:173px" width="12" height="10" viewBox="0 0 12 10"><path d="M1 1L11 9M11 1L1 9" stroke="#d9472b" stroke-width="1.8"/></svg>
<svg style="position:absolute;left:378.5px;top:162px" width="11" height="10" viewBox="0 0 11 10"><rect x="0.7" y="0.7" width="9.6" height="8.6" rx="1" fill="#fff" stroke="#2a4f7f" stroke-width="1.2"/><rect x="8" y="2" width="1.5" height="6" fill="#e9a07a"/></svg>
<svg style="position:absolute;left:378.5px;top:176.5px" width="12" height="11.5" viewBox="0 0 12 11.5"><circle cx="5" cy="1.8" r="1.6" fill="#2a62a6"/><circle cx="8" cy="2" r="1.4" fill="#4aa06a"/><path d="M0.8 6L3 8.8L7 3.5" fill="none" stroke="#2a62a6" stroke-width="1.3"/><circle cx="8.5" cy="8" r="2.8" fill="#aaa" stroke="#888" stroke-width="0.6"/></svg>
<svg style="position:absolute;left:378.5px;top:191.5px" width="12" height="12" viewBox="0 0 12 12"><path d="M3 0.5h5l2.5 2.5v8.5H3z" fill="#fff" stroke="#777" stroke-width="0.9"/><path d="M0.5 9.5h5M2.5 7.5l-2 2l2 2" fill="none" stroke="#7a3fa8" stroke-width="1.1"/></svg>
<svg style="position:absolute;left:391.8px;top:197.5px" width="4" height="2.4" viewBox="0 0 4 2.4"><polygon points="0,0 4,0 2.0,2.4" fill="#444"/></svg>
<div style="position:absolute;left:338.50px;top:185.30px;line-height:8.5px;font-size:8.5px;font-weight:normal;color:#2b2b2b;white-space:pre;transform-origin:0 0;transform:scaleX(0.9785)">Einladung</div>
<div style="position:absolute;left:338.50px;top:196.10px;line-height:8.5px;font-size:8.5px;font-weight:normal;color:#2b2b2b;white-space:pre;transform-origin:0 0;transform:scaleX(0.9785)">stornieren</div>
<div style="position:absolute;left:349.00px;top:208.87px;line-height:7.6px;font-size:7.6px;font-weight:normal;color:#5a5a5a;-webkit-text-stroke:0.12px currentColor;white-space:pre;transform-origin:0 0;transform:scaleX(0.9689)">Teilnehmer</div>
<div style="position:absolute;left:408.8px;top:159.3px;width:21px;height:20.7px;box-sizing:border-box;border:1px solid #d8d8d8;background:#fff;"></div>
<svg style="position:absolute;left:414.5px;top:166px" width="11" height="10" viewBox="0 0 11 10"><path d="M9.3 3.6A4.3 4.3 0 0 0 1.5 3.8M1.4 6.4A4.3 4.3 0 0 0 9.5 6.2" fill="none" stroke="#444" stroke-width="1.1"/><path d="M0.5 2.2L1.5 4.3L3.6 3.3M10.5 7.8L9.5 5.7L7.4 6.7" fill="none" stroke="#444" stroke-width="1"/></svg>
<div style="position:absolute;left:401.60px;top:185.30px;line-height:8.5px;font-size:8.5px;font-weight:normal;color:#2b2b2b;white-space:pre;transform-origin:0 0;transform:scaleX(1.0261)">Optionen</div>
<svg style="position:absolute;left:417.5px;top:198.3px" width="4" height="2.4" viewBox="0 0 4 2.4"><polygon points="0,0 4,0 2.0,2.4" fill="#444"/></svg>
<div style="position:absolute;left:449.6px;top:159.3px;width:21px;height:20.7px;box-sizing:border-box;border:1px solid #d8d8d8;background:#fff;"></div>
<svg style="position:absolute;left:456.5px;top:164.5px" width="9" height="13" viewBox="0 0 9 13"><path d="M1 0.5V12.5" stroke="#777" stroke-width="1.1"/><path d="M1.5 1L8.5 3.8L1.5 6.5z" fill="#d9472b"/></svg>
<div style="position:absolute;left:440.80px;top:185.30px;line-height:8.5px;font-size:8.5px;font-weight:normal;color:#2b2b2b;white-space:pre;transform-origin:0 0;transform:scaleX(0.9678)">Kategorien</div>
<svg style="position:absolute;left:458.5px;top:198.3px" width="4" height="2.4" viewBox="0 0 4 2.4"><polygon points="0,0 4,0 2.0,2.4" fill="#444"/></svg>
<svg style="position:absolute;left:492.8px;top:162.5px" width="16" height="17" viewBox="0 0 16 17"><path d="M9.5 0.5L15.5 3.5V11L9.5 14.3L3.5 11V3.5z" fill="#1567c4"/><path d="M4.5 7.8L8.2 9.8V14L4.5 16.2L0.7 14V9.8z" fill="#1567c4" stroke="#f3f3f3" stroke-width="0.9"/></svg>
<div style="position:absolute;left:488.00px;top:185.30px;line-height:8.5px;font-size:8.5px;font-weight:normal;color:#2b2b2b;white-space:pre;transform-origin:0 0;transform:scaleX(1.0205)">Office-</div>
<div style="position:absolute;left:486.30px;top:196.10px;line-height:8.5px;font-size:8.5px;font-weight:normal;color:#2b2b2b;white-space:pre;transform-origin:0 0;transform:scaleX(1.0035)">Add-Ins</div>
<div style="position:absolute;left:488.40px;top:208.87px;line-height:7.6px;font-size:7.6px;font-weight:normal;color:#5a5a5a;-webkit-text-stroke:0.12px currentColor;white-space:pre;transform-origin:0 0;transform:scaleX(0.9552)">Add-Ins</div>
<svg style="position:absolute;left:588px;top:211px" width="6" height="4" viewBox="0 0 6 4"><path d="M0.5 3.5L3 1L5.5 3.5" fill="none" stroke="#444" stroke-width="1.1"/></svg>
<svg style="position:absolute;left:11px;top:230.3px" width="10" height="10" viewBox="0 0 10 10"><circle cx="5" cy="5" r="4.8" fill="#1f4e8f"/><rect x="4.2" y="4.2" width="1.6" height="4" fill="#fff"/><rect x="4.2" y="1.9" width="1.6" height="1.5" fill="#fff"/></svg>
<div style="position:absolute;left:24.50px;top:230.81px;line-height:9.2px;font-size:9.2px;font-weight:normal;color:#3a3a3a;white-space:pre;transform-origin:0 0;transform:scaleX(0.8943)">Sie haben diese Besprechungseinladung noch nicht gesendet.</div>
<svg style="position:absolute;left:18.5px;top:265.5px" width="20" height="12" viewBox="0 0 20 12"><path d="M0.5 1.5h3M0.5 3.5h3M0.8 5.5h2.7" stroke="#999" stroke-width="0.7"/><rect x="3.8" y="0.9" width="15.5" height="10.2" fill="#fff" stroke="#6e6e6e" stroke-width="0.7"/><rect x="15.8" y="2" width="1.6" height="3.2" fill="#1b3a6a"/><path d="M6.5 5.6h6.5M6.5 7h6" stroke="#b8c0cc" stroke-width="0.6"/></svg>
<div style="position:absolute;left:14.70px;top:286.20px;line-height:8.5px;font-size:8.5px;font-weight:normal;color:#333;white-space:pre;transform-origin:0 0;transform:scaleX(0.8426)">Senden</div>
<div style="position:absolute;left:8.3px;top:247px;width:39.8px;height:62px;box-sizing:border-box;border:2.8px solid #c90a12;background:transparent;border-radius:7px"></div>
<div style="position:absolute;left:24.05px;top:249.93px;line-height:14.5px;font-size:14.5px;font-weight:bold;color:#c90a12;-webkit-text-stroke:0px currentColor;white-space:pre;transform-origin:0 0;transform:scaleX(1.0000)">4.</div>
<div style="position:absolute;left:54.3px;top:249px;width:33.4px;height:20.4px;box-sizing:border-box;border:1px solid #d0d0d0;background:#fdfdfd;"></div>
<div style="position:absolute;left:64.00px;top:254.80px;line-height:8.5px;font-size:8.5px;font-weight:normal;color:#333;white-space:pre;transform-origin:0 0;transform:scaleX(0.7721)">An...</div>
<div style="position:absolute;left:54.40px;top:276.80px;line-height:8.5px;font-size:8.5px;font-weight:normal;color:#6b6b6b;white-space:pre;transform-origin:0 0;transform:scaleX(0.8517)">Betreff</div>
<div style="position:absolute;left:54.40px;top:298.30px;line-height:8.5px;font-size:8.5px;font-weight:normal;color:#6b6b6b;white-space:pre;transform-origin:0 0;transform:scaleX(0.8804)">Ort</div>
<div style="position:absolute;left:54.40px;top:320.40px;line-height:8.5px;font-size:8.5px;font-weight:normal;color:#6b6b6b;white-space:pre;transform-origin:0 0;transform:scaleX(0.8425)">Beginn</div>
<div style="position:absolute;left:54.40px;top:341.20px;line-height:8.5px;font-size:8.5px;font-weight:normal;color:#6b6b6b;white-space:pre;transform-origin:0 0;transform:scaleX(0.7855)">Ende</div>
<div style="position:absolute;left:75.15px;top:286.13px;line-height:14.5px;font-size:14.5px;font-weight:bold;color:#c90a12;-webkit-text-stroke:0px currentColor;white-space:pre;transform-origin:0 0;transform:scaleX(1.0000)">2.</div>
<div style="position:absolute;left:94.2px;top:252px;width:368.4px;height:14.4px;box-sizing:border-box;border:1px solid #c6c6c6;background:#fff;"></div>
<div style="position:absolute;left:96.90px;top:254.58px;line-height:9px;font-size:9px;font-weight:normal;color:#222;-webkit-text-stroke:0.1px currentColor;white-space:pre;transform-origin:0 0;transform:scaleX(0.8066)">Max Mustermann;</div>
<div style="position:absolute;left:96.9px;top:263.8px;width:58px;height:0.8px;background:#444;"></div>
<div style="position:absolute;left:94.2px;top:272.2px;width:368.4px;height:17.4px;box-sizing:border-box;border:1px solid #c6c6c6;background:#fff;"></div>
<div style="position:absolute;left:96.90px;top:274.58px;line-height:9px;font-size:9px;font-weight:normal;color:#222;-webkit-text-stroke:0.1px currentColor;white-space:pre;transform-origin:0 0;transform:scaleX(0.7710)">Besprechung</div>
<div style="position:absolute;left:94.2px;top:296px;width:313.8px;height:13.6px;box-sizing:border-box;border:1px solid #c6c6c6;background:#fff;"></div>
<div style="position:absolute;left:96.90px;top:297.68px;line-height:9px;font-size:9px;font-weight:normal;color:#222;-webkit-text-stroke:0.1px currentColor;white-space:pre;transform-origin:0 0;transform:scaleX(0.8055)">Raumverwaltung oder per Hand eingeben</div>
<svg style="position:absolute;left:399.5px;top:300.8px" width="6" height="3.2" viewBox="0 0 6 3.2"><polygon points="0,0 6,0 3.0,3.2" fill="#222"/></svg>
<div style="position:absolute;left:94.2px;top:316.6px;width:126.8px;height:17.5px;box-sizing:border-box;border:1px solid #c6c6c6;background:#fff;"></div>
<div style="position:absolute;left:227.7px;top:316.6px;width:79.7px;height:17.5px;box-sizing:border-box;border:1px solid #c6c6c6;background:#fff;"></div>
<svg style="position:absolute;left:206.5px;top:320.6px" width="10.5" height="9.5" viewBox="0 0 10.5 9.5"><rect x="0.5" y="0.5" width="9.5" height="8.5" fill="#fff" stroke="#777" stroke-width="0.9"/><rect x="0" y="0" width="10.5" height="2" fill="#666"/><path d="M3.5 2v7M6.5 2v7M0.5 4.5h9.5M0.5 6.8h9.5" stroke="#aaa" stroke-width="0.6"/></svg>
<svg style="position:absolute;left:298px;top:324.1px" width="6.5" height="3.3" viewBox="0 0 6.5 3.3"><polygon points="0,0 6.5,0 3.25,3.3" fill="#222"/></svg>
<div style="position:absolute;left:94.2px;top:337px;width:126.8px;height:17.5px;box-sizing:border-box;border:1px solid #c6c6c6;background:#fff;"></div>
<div style="position:absolute;left:227.7px;top:337px;width:79.7px;height:17.5px;box-sizing:border-box;border:1px solid #c6c6c6;background:#fff;"></div>
<svg style="position:absolute;left:206.5px;top:341px" width="10.5" height="9.5" viewBox="0 0 10.5 9.5"><rect x="0.5" y="0.5" width="9.5" height="8.5" fill="#fff" stroke="#777" stroke-width="0.9"/><rect x="0" y="0" width="10.5" height="2" fill="#666"/><path d="M3.5 2v7M6.5 2v7M0.5 4.5h9.5M0.5 6.8h9.5" stroke="#aaa" stroke-width="0.6"/></svg>
<svg style="position:absolute;left:298px;top:344.5px" width="6.5" height="3.3" viewBox="0 0 6.5 3.3"><polygon points="0,0 6.5,0 3.25,3.3" fill="#222"/></svg>
<div style="position:absolute;left:96.90px;top:318.28px;line-height:9px;font-size:9px;font-weight:normal;color:#222;-webkit-text-stroke:0.1px currentColor;white-space:pre;transform-origin:0 0;transform:scaleX(0.8011)">Di 07.03.2017</div>
<div style="position:absolute;left:96.90px;top:338.08px;line-height:9px;font-size:9px;font-weight:normal;color:#222;-webkit-text-stroke:0.1px currentColor;white-space:pre;transform-origin:0 0;transform:scaleX(0.8011)">Di 07.03.2017</div>
<div style="position:absolute;left:230.30px;top:318.28px;line-height:9px;font-size:9px;font-weight:normal;color:#222;-webkit-text-stroke:0.1px currentColor;white-space:pre;transform-origin:0 0;transform:scaleX(0.7856)">13:30</div>
<div style="position:absolute;left:230.30px;top:338.08px;line-height:9px;font-size:9px;font-weight:normal;color:#222;-webkit-text-stroke:0.1px currentColor;white-space:pre;transform-origin:0 0;transform:scaleX(0.7856)">14:00</div>
<div style="position:absolute;left:314px;top:320.5px;width:9.3px;height:9.3px;box-sizing:border-box;border:1px solid #8a8a8a;background:#fff;"></div>
<div style="position:absolute;left:326.00px;top:320.80px;line-height:8.5px;font-size:8.5px;font-weight:normal;color:#6b6b6b;white-space:pre;transform-origin:0 0;transform:scaleX(0.8330)">Ganztägiges Ereignis</div>
<div style="position:absolute;left:90.8px;top:246px;width:375.59999999999997px;height:111.80000000000001px;box-sizing:border-box;border:2.8px solid #c90a12;background:transparent;border-radius:8.5px"></div>
<div style="position:absolute;left:10.3px;top:360.3px;width:452.2px;height:113.7px;box-sizing:border-box;border:1px solid #d6d6d6;background:#fff;"></div>
<div style="position:absolute;left:15.80px;top:370.30px;line-height:9.8px;font-size:9.8px;font-weight:normal;color:#111;white-space:pre;transform-origin:0 0;transform:scaleX(0.9442)">Hallo Max,</div>
<div style="position:absolute;left:15.80px;top:395.20px;line-height:9.8px;font-size:9.8px;font-weight:normal;color:#111;white-space:pre;transform-origin:0 0;transform:scaleX(0.9561)">ich lade dich zu der bereits angekündigten Besprechung ein.</div>
<div style="position:absolute;left:15.80px;top:420.20px;line-height:9.8px;font-size:9.8px;font-weight:normal;color:#111;white-space:pre;transform-origin:0 0;transform:scaleX(0.9253)">Viele Grüße</div>
<div style="position:absolute;left:15.80px;top:432.70px;line-height:9.8px;font-size:9.8px;font-weight:normal;color:#111;white-space:pre;transform-origin:0 0;transform:scaleX(0.9987)">Marita</div>
<div style="position:absolute;left:9px;top:365px;width:274px;height:83.5px;box-sizing:border-box;border:2.8px solid #c90a12;background:transparent;border-radius:8px"></div>
<div style="position:absolute;left:118.95px;top:373.53px;line-height:14.5px;font-size:14.5px;font-weight:bold;color:#c90a12;-webkit-text-stroke:0px currentColor;white-space:pre;transform-origin:0 0;transform:scaleX(1.0000)">3.</div>
<div style="position:absolute;left:468.5px;top:218px;width:131px;height:261px;background:#e9e9e9;"></div>
<div style="position:absolute;left:471px;top:246px;width:112.8px;height:230.5px;background:#ffffff;"></div>
<div style="position:absolute;left:476.40px;top:226.88px;line-height:15.5px;font-size:15.5px;font-weight:normal;color:#2a6ab5;-webkit-text-stroke:0px currentColor;white-space:pre;transform-origin:0 0;transform:scaleX(0.8837)">Raumsuche</div>
<div style="position:absolute;left:544.8px;top:225px;width:8px;height:18px;background:#e9e9e9;"></div>
<svg style="position:absolute;left:553.3px;top:231.3px" width="5.2" height="3" viewBox="0 0 5.2 3"><polygon points="0,0 5.2,0 2.6,3" fill="#444"/></svg>
<svg style="position:absolute;left:580.8px;top:229.7px" width="7.2" height="7.6" viewBox="0 0 7.2 7.6"><path d="M0.4 0.4L6.8 7.2M6.8 0.4L0.4 7.2" stroke="#555" stroke-width="0.9"/></svg>
<svg style="position:absolute;left:487.4px;top:253.8px" width="3.5" height="6" viewBox="0 0 3.5 6"><polygon points="3.5,0 3.5,6 0,3" fill="#111"/></svg>
<svg style="position:absolute;left:565.2px;top:253.5px" width="3.5" height="6" viewBox="0 0 3.5 6"><polygon points="0,0 0,6 3.5,3" fill="#111"/></svg>
<div style="position:absolute;left:510.00px;top:252.57px;line-height:8.3px;font-size:8.3px;font-weight:normal;color:#333;white-space:pre;transform-origin:0 0;transform:scaleX(0.8800)">März 2017</div>
<div style="position:absolute;left:480.36px;top:266.57px;line-height:8.3px;font-size:8.3px;font-weight:normal;color:#333;-webkit-text-stroke:0.1px currentColor;white-space:pre;transform-origin:0 0;transform:scaleX(0.9539)">Mo</div>
<div style="position:absolute;left:496.04px;top:266.57px;line-height:8.3px;font-size:8.3px;font-weight:normal;color:#333;-webkit-text-stroke:0.1px currentColor;white-space:pre;transform-origin:0 0;transform:scaleX(0.9562)">Di</div>
<div style="position:absolute;left:509.73px;top:266.57px;line-height:8.3px;font-size:8.3px;font-weight:normal;color:#333;-webkit-text-stroke:0.1px currentColor;white-space:pre;transform-origin:0 0;transform:scaleX(0.9127)">Mi</div>
<div style="position:absolute;left:522.75px;top:266.57px;line-height:8.3px;font-size:8.3px;font-weight:normal;color:#333;-webkit-text-stroke:0.1px currentColor;white-space:pre;transform-origin:0 0;transform:scaleX(0.9237)">Do</div>
<div style="position:absolute;left:538.44px;top:266.57px;line-height:8.3px;font-size:8.3px;font-weight:normal;color:#333;-webkit-text-stroke:0.1px currentColor;white-space:pre;transform-origin:0 0;transform:scaleX(0.8032)">Fr</div>
<div style="position:absolute;left:551.72px;top:266.57px;line-height:8.3px;font-size:8.3px;font-weight:normal;color:#333;-webkit-text-stroke:0.1px currentColor;white-space:pre;transform-origin:0 0;transform:scaleX(0.7483)">Sa</div>
<div style="position:absolute;left:565.10px;top:266.57px;line-height:8.3px;font-size:8.3px;font-weight:normal;color:#333;-webkit-text-stroke:0.1px currentColor;white-space:pre;transform-origin:0 0;transform:scaleX(0.8566)">So</div>
<div style="position:absolute;left:478.9px;top:277.2px;width:97.50999999999999px;height:21.4px;background:#dcdcdc;"></div>
<div style="position:absolute;left:548.55px;top:298.59999999999997px;width:27.86px;height:42.8px;background:#dcdcdc;"></div>
<div style="position:absolute;left:492.83px;top:287.9px;width:13.93px;height:10.7px;background:#f9cf6a;"></div>
<div style="position:absolute;left:535.22px;top:288.09999999999997px;width:13.53px;height:11.0px;box-sizing:border-box;border:1px solid #5a8fc8;background:#fff;"></div>
<div style="position:absolute;left:481.45px;top:279.27px;line-height:8.3px;font-size:8.3px;font-weight:normal;color:#a3a3a3;-webkit-text-stroke:0.05px currentColor;white-space:pre;transform-origin:0 0;transform:scaleX(1.0000)">27</div>
<div style="position:absolute;left:495.38px;top:279.27px;line-height:8.3px;font-size:8.3px;font-weight:normal;color:#a3a3a3;-webkit-text-stroke:0.05px currentColor;white-space:pre;transform-origin:0 0;transform:scaleX(1.0000)">28</div>
<div style="position:absolute;left:511.61px;top:279.27px;line-height:8.3px;font-size:8.3px;font-weight:normal;color:#222;-webkit-text-stroke:0.05px currentColor;white-space:pre;transform-origin:0 0;transform:scaleX(1.0000)">1</div>
<div style="position:absolute;left:525.54px;top:279.27px;line-height:8.3px;font-size:8.3px;font-weight:normal;color:#222;-webkit-text-stroke:0.05px currentColor;white-space:pre;transform-origin:0 0;transform:scaleX(1.0000)">2</div>
<div style="position:absolute;left:539.47px;top:279.27px;line-height:8.3px;font-size:8.3px;font-weight:normal;color:#222;-webkit-text-stroke:0.05px currentColor;white-space:pre;transform-origin:0 0;transform:scaleX(1.0000)">3</div>
<div style="position:absolute;left:553.40px;top:279.27px;line-height:8.3px;font-size:8.3px;font-weight:normal;color:#222;-webkit-text-stroke:0.05px currentColor;white-space:pre;transform-origin:0 0;transform:scaleX(1.0000)">4</div>
<div style="position:absolute;left:567.33px;top:279.27px;line-height:8.3px;font-size:8.3px;font-weight:normal;color:#222;-webkit-text-stroke:0.05px currentColor;white-space:pre;transform-origin:0 0;transform:scaleX(1.0000)">5</div>
<div style="position:absolute;left:483.75px;top:289.97px;line-height:8.3px;font-size:8.3px;font-weight:normal;color:#222;-webkit-text-stroke:0.05px currentColor;white-space:pre;transform-origin:0 0;transform:scaleX(1.0000)">6</div>
<div style="position:absolute;left:497.68px;top:289.97px;line-height:8.3px;font-size:8.3px;font-weight:bold;color:#222;-webkit-text-stroke:0.05px currentColor;white-space:pre;transform-origin:0 0;transform:scaleX(1.0000)">7</div>
<div style="position:absolute;left:511.61px;top:289.97px;line-height:8.3px;font-size:8.3px;font-weight:normal;color:#222;-webkit-text-stroke:0.05px currentColor;white-space:pre;transform-origin:0 0;transform:scaleX(1.0000)">8</div>
<div style="position:absolute;left:525.54px;top:289.97px;line-height:8.3px;font-size:8.3px;font-weight:normal;color:#222;-webkit-text-stroke:0.05px currentColor;white-space:pre;transform-origin:0 0;transform:scaleX(1.0000)">9</div>
<div style="position:absolute;left:537.17px;top:289.97px;line-height:8.3px;font-size:8.3px;font-weight:normal;color:#222;-webkit-text-stroke:0.05px currentColor;white-space:pre;transform-origin:0 0;transform:scaleX(1.0000)">10</div>
<div style="position:absolute;left:551.40px;top:289.97px;line-height:8.3px;font-size:8.3px;font-weight:normal;color:#222;-webkit-text-stroke:0.05px currentColor;white-space:pre;transform-origin:0 0;transform:scaleX(1.0000)">11</div>
<div style="position:absolute;left:565.03px;top:289.97px;line-height:8.3px;font-size:8.3px;font-weight:normal;color:#222;-webkit-text-stroke:0.05px currentColor;white-space:pre;transform-origin:0 0;transform:scaleX(1.0000)">12</div>
<div style="position:absolute;left:481.45px;top:300.67px;line-height:8.3px;font-size:8.3px;font-weight:normal;color:#222;-webkit-text-stroke:0.05px currentColor;white-space:pre;transform-origin:0 0;transform:scaleX(1.0000)">13</div>
<div style="position:absolute;left:495.38px;top:300.67px;line-height:8.3px;font-size:8.3px;font-weight:normal;color:#222;-webkit-text-stroke:0.05px currentColor;white-space:pre;transform-origin:0 0;transform:scaleX(1.0000)">14</div>
<div style="position:absolute;left:509.31px;top:300.67px;line-height:8.3px;font-size:8.3px;font-weight:normal;color:#222;-webkit-text-stroke:0.05px currentColor;white-space:pre;transform-origin:0 0;transform:scaleX(1.0000)">15</div>
<div style="position:absolute;left:523.24px;top:300.67px;line-height:8.3px;font-size:8.3px;font-weight:normal;color:#222;-webkit-text-stroke:0.05px currentColor;white-space:pre;transform-origin:0 0;transform:scaleX(1.0000)">16</div>
<div style="position:absolute;left:537.17px;top:300.67px;line-height:8.3px;font-size:8.3px;font-weight:normal;color:#222;-webkit-text-stroke:0.05px currentColor;white-space:pre;transform-origin:0 0;transform:scaleX(1.0000)">17</div>
<div style="position:absolute;left:551.10px;top:300.67px;line-height:8.3px;font-size:8.3px;font-weight:normal;color:#222;-webkit-text-stroke:0.05px currentColor;white-space:pre;transform-origin:0 0;transform:scaleX(1.0000)">18</div>
<div style="position:absolute;left:565.03px;top:300.67px;line-height:8.3px;font-size:8.3px;font-weight:normal;color:#222;-webkit-text-stroke:0.05px currentColor;white-space:pre;transform-origin:0 0;transform:scaleX(1.0000)">19</div>
<div style="position:absolute;left:481.45px;top:311.37px;line-height:8.3px;font-size:8.3px;font-weight:normal;color:#222;-webkit-text-stroke:0.05px currentColor;white-space:pre;transform-origin:0 0;transform:scaleX(1.0000)">20</div>
<div style="position:absolute;left:495.38px;top:311.37px;line-height:8.3px;font-size:8.3px;font-weight:normal;color:#222;-webkit-text-stroke:0.05px currentColor;white-space:pre;transform-origin:0 0;transform:scaleX(1.0000)">21</div>
<div style="position:absolute;left:509.31px;top:311.37px;line-height:8.3px;font-size:8.3px;font-weight:normal;color:#222;-webkit-text-stroke:0.05px currentColor;white-space:pre;transform-origin:0 0;transform:scaleX(1.0000)">22</div>
<div style="position:absolute;left:523.24px;top:311.37px;line-height:8.3px;font-size:8.3px;font-weight:normal;color:#222;-webkit-text-stroke:0.05px currentColor;white-space:pre;transform-origin:0 0;transform:scaleX(1.0000)">23</div>
<div style="position:absolute;left:537.17px;top:311.37px;line-height:8.3px;font-size:8.3px;font-weight:normal;color:#222;-webkit-text-stroke:0.05px currentColor;white-space:pre;transform-origin:0 0;transform:scaleX(1.0000)">24</div>
<div style="position:absolute;left:551.10px;top:311.37px;line-height:8.3px;font-size:8.3px;font-weight:normal;color:#222;-webkit-text-stroke:0.05px currentColor;white-space:pre;transform-origin:0 0;transform:scaleX(1.0000)">25</div>
<div style="position:absolute;left:565.03px;top:311.37px;line-height:8.3px;font-size:8.3px;font-weight:normal;color:#222;-webkit-text-stroke:0.05px currentColor;white-space:pre;transform-origin:0 0;transform:scaleX(1.0000)">26</div>
<div style="position:absolute;left:481.45px;top:322.07px;line-height:8.3px;font-size:8.3px;font-weight:normal;color:#222;-webkit-text-stroke:0.05px currentColor;white-space:pre;transform-origin:0 0;transform:scaleX(1.0000)">27</div>
<div style="position:absolute;left:495.38px;top:322.07px;line-height:8.3px;font-size:8.3px;font-weight:normal;color:#222;-webkit-text-stroke:0.05px currentColor;white-space:pre;transform-origin:0 0;transform:scaleX(1.0000)">28</div>
<div style="position:absolute;left:509.31px;top:322.07px;line-height:8.3px;font-size:8.3px;font-weight:normal;color:#222;-webkit-text-stroke:0.05px currentColor;white-space:pre;transform-origin:0 0;transform:scaleX(1.0000)">29</div>
<div style="position:absolute;left:523.24px;top:322.07px;line-height:8.3px;font-size:8.3px;font-weight:normal;color:#222;-webkit-text-stroke:0.05px currentColor;white-space:pre;transform-origin:0 0;transform:scaleX(1.0000)">30</div>
<div style="position:absolute;left:537.17px;top:322.07px;line-height:8.3px;font-size:8.3px;font-weight:normal;color:#222;-webkit-text-stroke:0.05px currentColor;white-space:pre;transform-origin:0 0;transform:scaleX(1.0000)">31</div>
<div style="position:absolute;left:553.40px;top:322.07px;line-height:8.3px;font-size:8.3px;font-weight:normal;color:#a3a3a3;-webkit-text-stroke:0.05px currentColor;white-space:pre;transform-origin:0 0;transform:scaleX(1.0000)">1</div>
<div style="position:absolute;left:567.33px;top:322.07px;line-height:8.3px;font-size:8.3px;font-weight:normal;color:#a3a3a3;-webkit-text-stroke:0.05px currentColor;white-space:pre;transform-origin:0 0;transform:scaleX(1.0000)">2</div>
<div style="position:absolute;left:483.75px;top:332.77px;line-height:8.3px;font-size:8.3px;font-weight:normal;color:#a3a3a3;-webkit-text-stroke:0.05px currentColor;white-space:pre;transform-origin:0 0;transform:scaleX(1.0000)">3</div>
<div style="position:absolute;left:497.68px;top:332.77px;line-height:8.3px;font-size:8.3px;font-weight:normal;color:#a3a3a3;-webkit-text-stroke:0.05px currentColor;white-space:pre;transform-origin:0 0;transform:scaleX(1.0000)">4</div>
<div style="position:absolute;left:511.61px;top:332.77px;line-height:8.3px;font-size:8.3px;font-weight:normal;color:#a3a3a3;-webkit-text-stroke:0.05px currentColor;white-space:pre;transform-origin:0 0;transform:scaleX(1.0000)">5</div>
<div style="position:absolute;left:525.54px;top:332.77px;line-height:8.3px;font-size:8.3px;font-weight:normal;color:#a3a3a3;-webkit-text-stroke:0.05px currentColor;white-space:pre;transform-origin:0 0;transform:scaleX(1.0000)">6</div>
<div style="position:absolute;left:539.47px;top:332.77px;line-height:8.3px;font-size:8.3px;font-weight:normal;color:#a3a3a3;-webkit-text-stroke:0.05px currentColor;white-space:pre;transform-origin:0 0;transform:scaleX(1.0000)">7</div>
<div style="position:absolute;left:553.40px;top:332.77px;line-height:8.3px;font-size:8.3px;font-weight:normal;color:#a3a3a3;-webkit-text-stroke:0.05px currentColor;white-space:pre;transform-origin:0 0;transform:scaleX(1.0000)">8</div>
<div style="position:absolute;left:567.33px;top:332.77px;line-height:8.3px;font-size:8.3px;font-weight:normal;color:#a3a3a3;-webkit-text-stroke:0.05px currentColor;white-space:pre;transform-origin:0 0;transform:scaleX(1.0000)">9</div>
<svg style="position:absolute;left:587.8px;top:250.6px" width="5" height="3" viewBox="0 0 5 3"><path d="M0.5 2.6L2.5 0.6L4.5 2.6" fill="none" stroke="#222" stroke-width="1.3"/></svg>
<div style="position:absolute;left:584.4px;top:258.5px;width:10.4px;height:34.7px;box-sizing:border-box;border:1px solid #c4c4c4;background:#dedede;"></div>
<div style="position:absolute;left:587.5px;top:272px;width:4.3px;height:0.7px;background:#777;"></div>
<div style="position:absolute;left:587.5px;top:274px;width:4.3px;height:0.7px;background:#777;"></div>
<div style="position:absolute;left:587.5px;top:276px;width:4.3px;height:0.7px;background:#777;"></div>
<svg style="position:absolute;left:588px;top:469.7px" width="5" height="2.3" viewBox="0 0 5 2.3"><polygon points="0,0 5,0 2.5,2.3" fill="#222"/></svg>
<div style="position:absolute;left:475.4px;top:349.6px;width:10.9px;height:11.2px;box-sizing:border-box;border:1px solid #a8a8a8;background:#fff;"></div>
<div style="position:absolute;left:488.80px;top:351.27px;line-height:8.3px;font-size:8.3px;font-weight:normal;color:#333;white-space:pre;transform-origin:0 0;transform:scaleX(0.8897)">Gut</div>
<div style="position:absolute;left:547.8px;top:349.6px;width:11.2px;height:11.5px;box-sizing:border-box;border:1px solid #9fb6d6;background:#c6dcf6;"></div>
<div style="position:absolute;left:561.40px;top:351.27px;line-height:8.3px;font-size:8.3px;font-weight:normal;color:#333;white-space:pre;transform-origin:0 0;transform:scaleX(0.9381)">Mittel</div>
<div style="position:absolute;left:475.4px;top:364px;width:10.9px;height:11.7px;box-sizing:border-box;border:1px solid #5b8ccc;background:#6c9fe0;"></div>
<div style="position:absolute;left:488.80px;top:365.37px;line-height:8.3px;font-size:8.3px;font-weight:normal;color:#333;white-space:pre;transform-origin:0 0;transform:scaleX(0.8389)">Schlecht</div>
<div style="position:absolute;left:475.40px;top:384.97px;line-height:8.3px;font-size:8.3px;font-weight:normal;color:#444;white-space:pre;transform-origin:0 0;transform:scaleX(0.8742)">Verfügbaren Raum auswählen:</div>
<div style="position:absolute;left:475.2px;top:395px;width:104.4px;height:76.3px;box-sizing:border-box;border:1px solid #a9a9a9;background:#fff;"></div>
<div style="position:absolute;left:477.50px;top:398.47px;line-height:8.3px;font-size:8.3px;font-weight:bold;color:#111;white-space:pre;transform-origin:0 0;transform:scaleX(0.7834)">Keine</div>
<svg style="position:absolute;left:412px;top:283px" width="70" height="39" viewBox="0 0 70 39"><polygon points="4,12 35,12 35,4 67.5,20.1 35,36.5 35,28.5 4,28.5" fill="#fff" stroke="#d20a12" stroke-width="2.6" stroke-linejoin="miter"/></svg>
<div style="position:absolute;left:425.50px;top:299.30px;line-height:8.5px;font-size:8.5px;font-weight:normal;color:#222;white-space:pre;transform-origin:0 0;transform:scaleX(0.7884)">Räume...</div>
<div style="position:absolute;left:90.8px;top:246px;width:375.59999999999997px;height:111.80000000000001px;box-sizing:border-box;border:2.8px solid #c90a12;background:transparent;border-radius:8.5px"></div>
<div style="position:absolute;left:600px;top:112px;width:1px;height:367px;background:#7fb6e6;"></div>
<div style="position:absolute;left:5px;top:112px;width:1.3px;height:367px;background:#b5d5ee;"></div>
</div></body></html>
